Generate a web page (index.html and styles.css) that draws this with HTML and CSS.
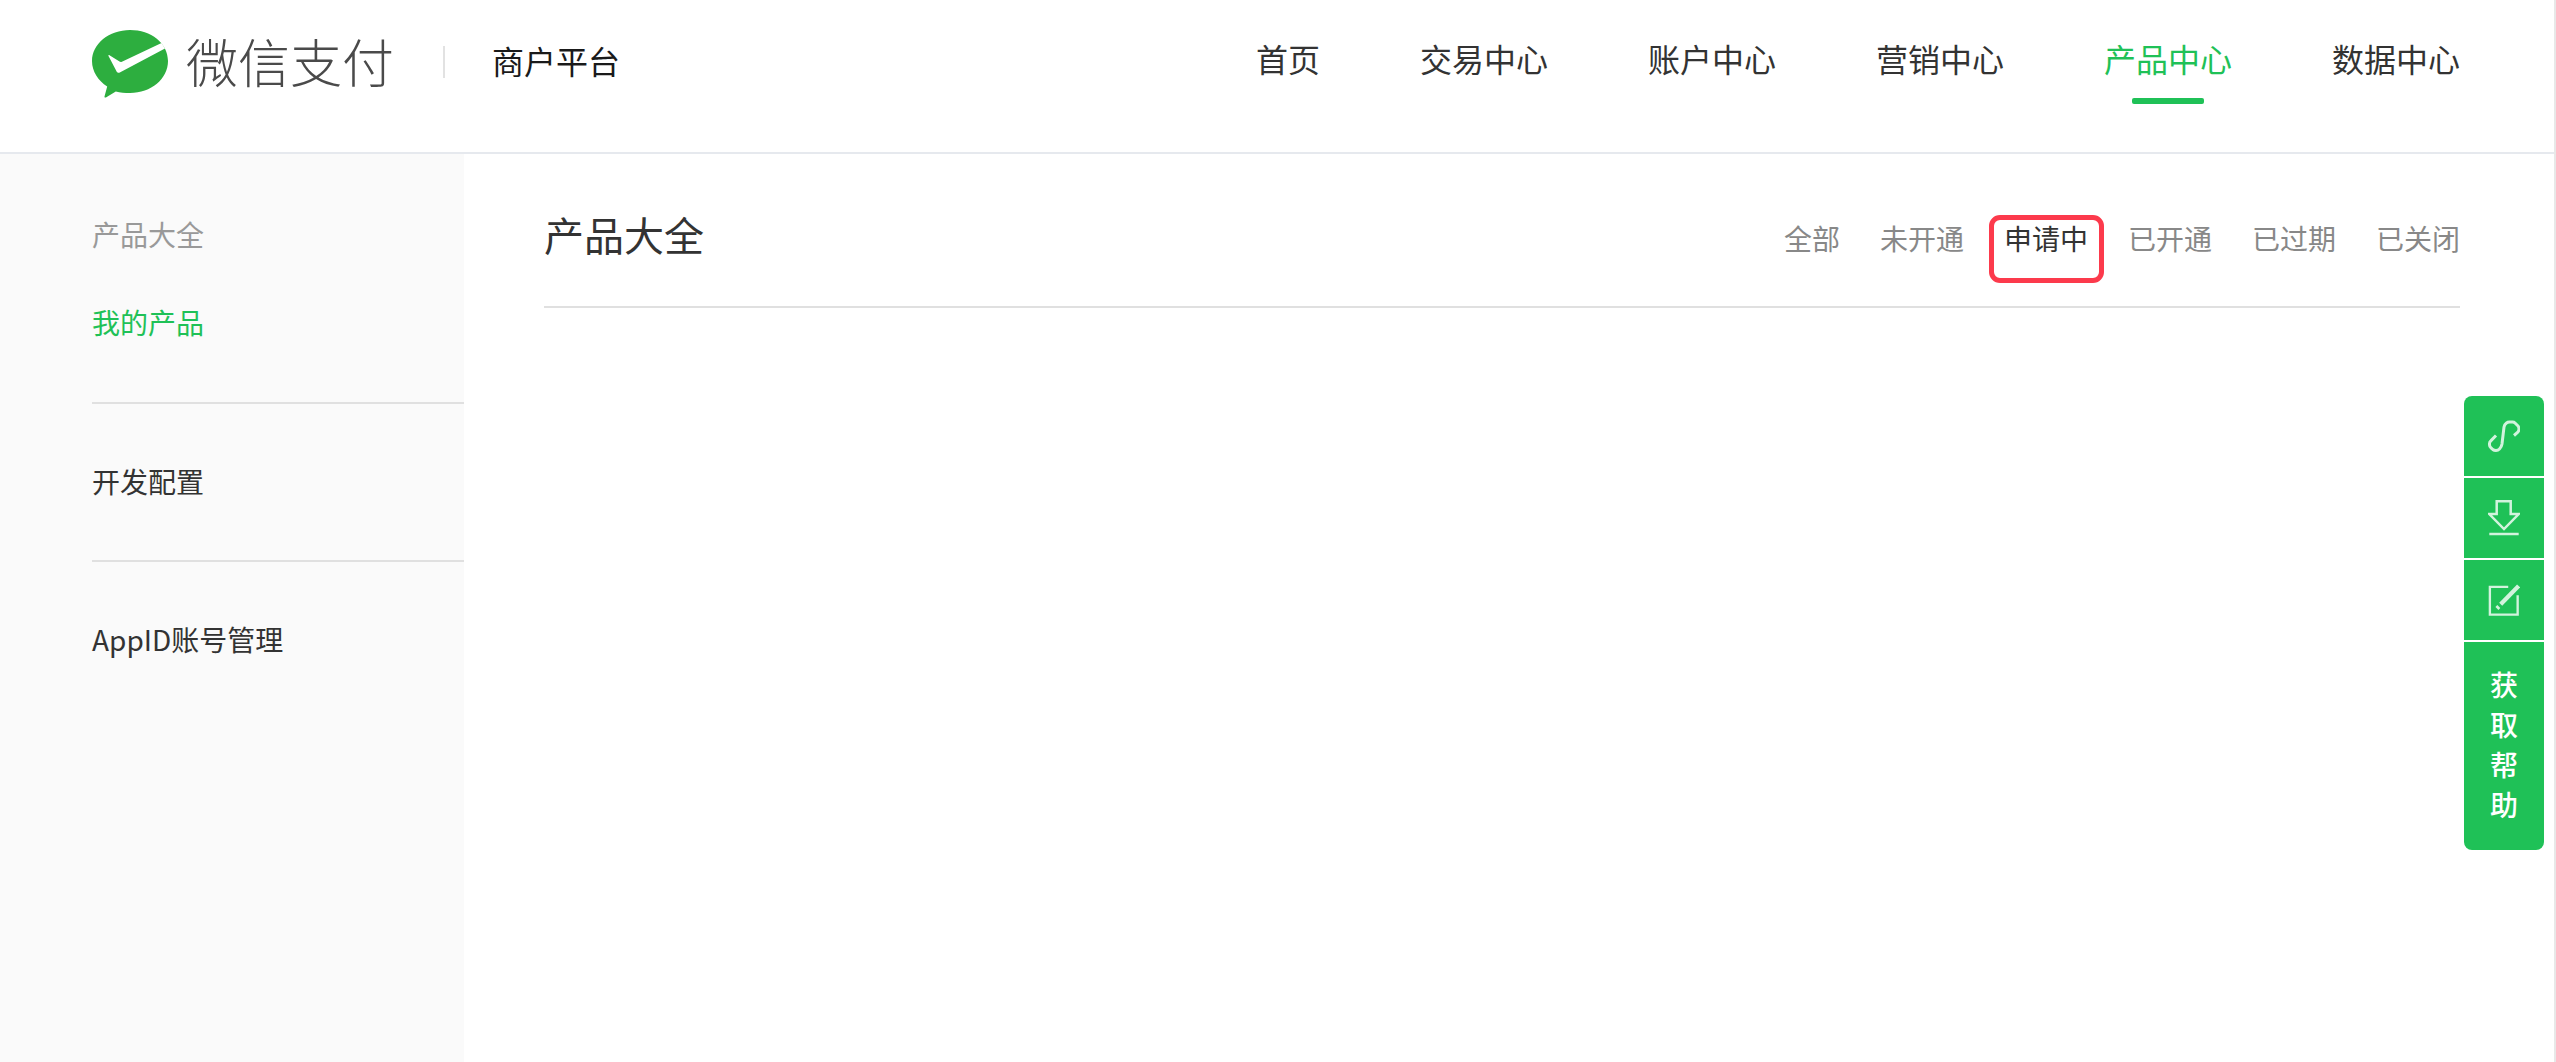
FILE: index.html
```html
<!DOCTYPE html>
<html lang="zh-CN">
<head>
<meta charset="utf-8">
<title>微信支付商户平台</title>
<link rel="stylesheet" href="styles.css">
</head>
<body>
<header class="topbar">
  <div class="brand">
    <svg class="logo" viewBox="0 0 76 68" aria-hidden="true">
      <path fill="#2dae3f" d="M38 0C17 0 0 13.900 0 31c0 10.500 6.300 19.800 15.200 25.400L12.500 66.500c-.2 1 .6 1.400 1.400.9L23.800 61.400C28.100 62.500 33 63 38 63c21 0 38-14.100 38-32S59 0 38 0z"/>
      <path fill="#fff" d="M17.500 25.200 27.500 31.600c.8.500 1.600.5 2.400.1L69.500 13l3.500 5.500L27.800 42.500c-1.300.7-2.800.2-3.300-1.200L16.500 26c-.3-.9.300-1.300 1-.8z"/>
    </svg>
    <span class="brand-name">微信支付</span>
    <span class="brand-sep"></span>
    <span class="brand-sub">商户平台</span>
  </div>
  <nav class="mainnav">
    <a class="mainnav-item">首页</a>
    <a class="mainnav-item">交易中心</a>
    <a class="mainnav-item">账户中心</a>
    <a class="mainnav-item">营销中心</a>
    <a class="mainnav-item is-active">产品中心</a>
    <a class="mainnav-item">数据中心</a>
  </nav>
</header>
<div class="layout">
  <aside class="sidebar">
    <section class="side-group side-group-first">
      <div class="side-heading">产品大全</div>
      <a class="side-link is-active">我的产品</a>
    </section>
    <section class="side-group">
      <a class="side-link">开发配置</a>
    </section>
    <section class="side-group side-group-last">
      <a class="side-link">AppID账号管理</a>
    </section>
  </aside>
  <main class="content">
    <div class="content-head">
      <h1 class="content-title">产品大全</h1>
      <div class="tabs">
        <a class="tab">全部</a>
        <a class="tab">未开通</a>
        <a class="tab is-current">申请中<span class="annot"></span></a>
        <a class="tab">已开通</a>
        <a class="tab">已过期</a>
        <a class="tab">已关闭</a>
      </div>
    </div>
  </main>
</div>
<div class="helper">
  <a class="helper-btn helper-top">
    <svg class="helper-icon helper-icon-link" viewBox="0 0 32 32" aria-hidden="true"><path d="M8 15.500 2.800 20.800Q1.500 22 1.500 23.500V25Q1.500 26.500 3 27.800L4.800 29.500Q6 30.500 8 30.500 10 30.500 11.500 29 13.500 27 14 24L16 7Q16.500 4.500 18.500 3 19.500 2 21.500 2H24.500Q26 2 27 3L29.800 5.800Q31 7 31 9 31 11 29.500 12.500L26 15.500"/></svg>
  </a>
  <a class="helper-btn">
    <svg class="helper-icon helper-icon-tall" viewBox="0 0 32 36" aria-hidden="true"><path d="M8.700 1.300H22.700V14H30.700L16 29 1.300 14H8.700Z"/><path d="M1.300 34H30.700"/></svg>
  </a>
  <a class="helper-btn">
    <svg class="helper-icon" viewBox="0 0 33 34" aria-hidden="true"><path d="M21 3H1.500V32.500H31V12"/><path class="helper-pen" d="M13 21.500 32 2"/><path class="helper-pen" d="M9 26 11 24"/></svg>
  </a>
  <a class="helper-btn helper-text">获<br>取<br>帮<br>助</a>
</div>
</body>
</html>
```
FILE: styles.css
```css
* { box-sizing: border-box; }
html, body { margin: 0; height: 100%; overflow: hidden; }
body {
  background: #fff;
  color: #333;
  border-right: 2px solid #e8e8e8;
  font-family: "Noto Sans CJK SC", "Liberation Sans", sans-serif;
  font-size: 28px;
}
a { color: inherit; text-decoration: none; }

.topbar {
  display: flex;
  justify-content: space-between;
  align-items: flex-start;
  height: 154px;
  padding: 0 94px 0 92px;
  border-bottom: 2px solid #e6e9ee;
}
.brand { display: flex; align-items: center; height: 124px; }
.logo { width: 76px; height: 68px; flex: none; margin-top: 4px; }
.brand-name {
  margin: -2px 0 0 18px;
  font-size: 52px;
  line-height: 72px;
  font-weight: 300;
  color: #4a4a4a;
}
.brand-sep {
  width: 2px;
  height: 32px;
  margin: 0 47px 0 49px;
  background: #e2e2e2;
}
.brand-sub { margin-top: -4px; font-size: 32px; color: #1a1a1a; }

.mainnav { display: flex; gap: 100px; }
.mainnav-item {
  position: relative;
  font-size: 32px;
  line-height: 44px;
  margin-top: 36px;
  color: #333;
}
.mainnav-item.is-active { color: #1fc157; }
.mainnav-item.is-active::after {
  content: "";
  position: absolute;
  left: 28px;
  top: 62px;
  width: 72px;
  height: 6px;
  border-radius: 2px;
  background: #1fc157;
}

.layout { display: flex; height: 908px; }
.sidebar {
  width: 464px;
  flex: none;
  padding-left: 92px;
  background: #fafafa;
}
.side-group {
  padding: 57px 0 59px;
  border-bottom: 2px solid #e0e0e0;
}
.side-group-first { padding: 60px 0 60px; }
.side-group-last { border-bottom: 0; }
.side-heading,
.side-link { display: block; font-size: 28px; line-height: 40px; }
.side-heading { color: #999; }
.side-link { color: #333; }
.side-group-first .side-link { margin-top: 48px; }
.side-link.is-active { color: #1fc157; }

.content { flex: 1; padding: 0 94px 0 80px; }
.content-head {
  display: flex;
  justify-content: space-between;
  align-items: flex-start;
  height: 154px;
  border-bottom: 2px solid #e0e0e0;
}
.content-title {
  margin: 52px 0 0;
  font-size: 40px;
  line-height: 56px;
  font-weight: 400;
  color: #333;
}
.tabs { display: flex; gap: 40px; margin-top: 64px; }
.tab { position: relative; font-size: 28px; line-height: 40px; color: #888; }
.tab.is-current { color: #333; }
.annot {
  position: absolute;
  left: -15px;
  top: -3px;
  width: 115px;
  height: 68px;
  border: 5px solid #fc3a4c;
  border-radius: 11px;
}

.helper {
  position: fixed;
  left: 2464px;
  top: 396px;
  width: 80px;
  display: flex;
  flex-direction: column;
  gap: 2px;
}
.helper-btn {
  display: flex;
  align-items: center;
  justify-content: center;
  height: 80px;
  background: #1fc157;
  color: #fff;
}
.helper-top { border-radius: 8px 8px 0 0; }
.helper-text {
  display: block;
  height: 208px;
  padding: 22px 0;
  border-radius: 0 0 8px 8px;
  font-size: 28px;
  font-weight: 500;
  line-height: 40px;
  text-align: center;
}
.helper-icon {
  width: 32px;
  height: 32px;
  fill: none;
  stroke: rgba(255, 255, 255, .8);
  stroke-width: 2.500;
}
.helper-icon-link { stroke-width: 3; }
.helper-icon-tall { height: 36px; }
.helper-pen { stroke-width: 4.500; }
```
